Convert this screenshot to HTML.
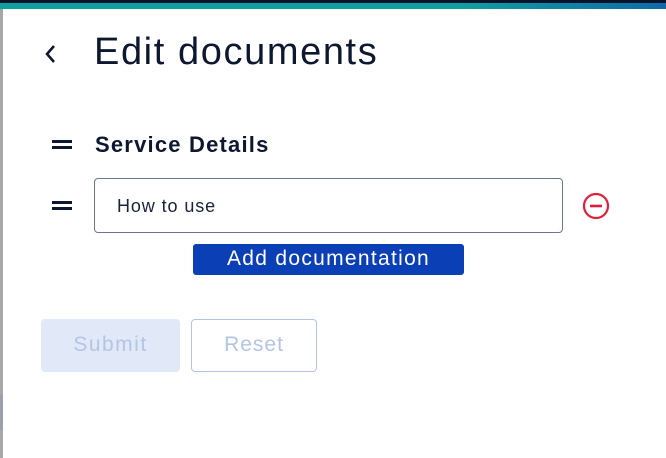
<!DOCTYPE html>
<html><head><style>
body{margin:0;width:666px;height:458px;overflow:hidden;background:#fff;font-family:"Liberation Sans",sans-serif;position:relative}
.a{position:absolute}
.ham{position:absolute;width:20px;height:9px;border-top:3px solid #0d1730;border-bottom:3px solid #0d1730;box-sizing:border-box}
</style></head><body>
<div class="a" style="left:0;top:0;width:666px;height:3px;background:#08122a"></div>
<div class="a" style="left:0;top:3px;width:666px;height:6px;background:linear-gradient(90deg,#0f9e9e 0%,#0f9e9e 70%,#0e6aa8 100%)"></div>
<div class="a" style="left:0;top:9px;width:3px;height:449px;background:#a8a8a8"></div>
<div class="a" style="left:0;top:395px;width:3px;height:35px;background:#9aa0ae"></div>
<svg class="a" style="left:42px;top:43px" width="16" height="22"><path d="M12 3 L5 11 L12 19" stroke="#0d1730" stroke-width="2.6" fill="none"/></svg>
<div class="a" style="left:94px;top:29px;font-size:38px;letter-spacing:1.6px;color:#0d1730;line-height:46px">Edit documents</div>
<div class="ham" style="left:52px;top:140px"></div>
<div class="a" style="left:95px;top:131px;font-size:22px;letter-spacing:1.2px;font-weight:bold;color:#0d1730;line-height:28px">Service Details</div>
<div class="ham" style="left:52px;top:201px"></div>
<div class="a" style="left:94px;top:178px;width:469px;height:55px;border:1px solid #6b7790;border-radius:4px;box-sizing:border-box"></div>
<div class="a" style="left:117px;top:195px;font-size:18px;letter-spacing:0.9px;color:#1a2238;line-height:22px">How to use</div>
<svg class="a" style="left:581px;top:192px" width="30" height="30"><circle cx="15" cy="14" r="12" stroke="#e0203a" stroke-width="2.2" fill="none"/><line x1="9" y1="14" x2="21" y2="14" stroke="#e0203a" stroke-width="2.6"/></svg>
<div class="a" style="left:193px;top:244px;width:271px;height:31px;background:#0b3fb5;border-radius:3px;color:#fff;font-size:21px;letter-spacing:1.3px;text-align:center;line-height:30px">Add documentation</div>
<div class="a" style="left:41px;top:319px;width:139px;height:53px;background:#e1e8f8;border-radius:4px;color:#b4c4e6;font-size:21px;letter-spacing:1.5px;text-align:center;line-height:51px">Submit</div>
<div class="a" style="left:191px;top:319px;width:126px;height:53px;border:1px solid #b4c4e6;border-radius:4px;box-sizing:border-box;color:#b4c4e6;font-size:21px;letter-spacing:1px;text-align:center;line-height:49px">Reset</div>
</body></html>
